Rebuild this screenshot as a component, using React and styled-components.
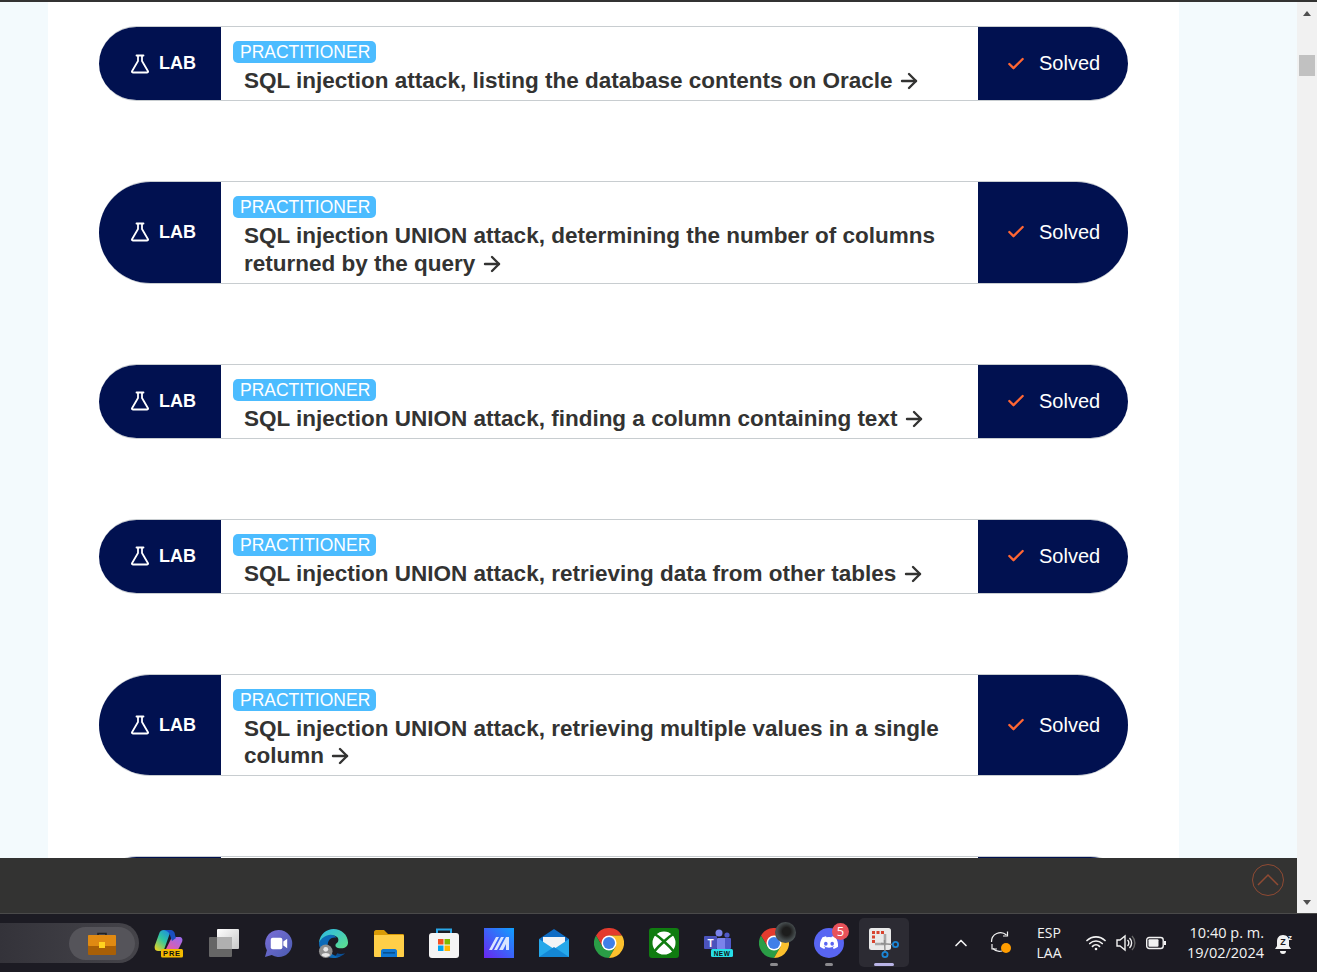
import React from 'react';
import styled, { createGlobalStyle } from 'styled-components';
import { ArrowRight, Check, ChevronUp } from 'lucide-react';

const Global = createGlobalStyle`
  html, body { margin: 0; padding: 0; overflow: hidden; }
  body { font-family: "Liberation Sans", Arial, sans-serif; background: #1c1b23; }
`;

const Screen = styled.div`
  width: 1317px;
  height: 972px;
  display: flex;
  flex-direction: column;
  overflow: hidden;
`;

const TopLine = styled.div`
  height: 2px;
  flex: none;
  background: #333332;
`;

const Browser = styled.div`
  height: 911px;
  flex: none;
  display: flex;
`;

const Page = styled.div`
  width: 1297px;
  display: flex;
  flex-direction: column;
`;

const Scroller = styled.div`
  height: 856px;
  flex: none;
  overflow: hidden;
  background: #f3fafd;
  padding: 0 118px 0 48px;
`;

const Column = styled.main`
  background: #fff;
  height: 1000px;
  padding: 24px 51px 0;
  display: flex;
  flex-direction: column;
  gap: 80px;
`;

const Card = styled.article`
  display: grid;
  grid-template-columns: 122px 757px 150px;
  width: 1029px;
  min-height: 75px;
  box-sizing: border-box;
  border-top: 1px solid #c8cdd0;
  border-bottom: 1px solid #c8cdd0;
  border-radius: 60px;
  overflow: hidden;
  flex: none;
`;

const Side = styled.div`
  background: #011150;
  color: #fff;
  display: flex;
  align-items: center;
  padding-left: ${(p) => (p.$right ? '28px' : '31px')};
`;

const LabText = styled.span`
  font-size: 18px;
  font-weight: 700;
  margin-left: 9px;
`;

const SolvedText = styled.span`
  font-size: 20px;
  margin-left: 13px;
`;

const Body = styled.div`
  padding: 14px 20px 5.3px 12px;
  background: #fff;
`;

const Badge = styled.span`
  display: block;
  width: 143px;
  height: 22px;
  line-height: 22px;
  box-sizing: border-box;
  padding-left: 7px;
  border-radius: 5px;
  background: #4cbcff;
  color: #fff;
  font-size: 17.5px;
  white-space: nowrap;
`;

const Title = styled.h3`
  margin: 4px 0 0 11px;
  color: #333332;
  font-size: 22.5px;
  line-height: 27.7px;
  font-weight: 700;
  svg { vertical-align: -1px; margin: -4px 0 -4px -2px; }
`;

const Footer = styled.footer`
  height: 55px;
  flex: none;
  background: #333332;
  display: flex;
  justify-content: flex-end;
  align-items: flex-start;
  padding: 6px 13px 0 0;
  box-sizing: border-box;
`;

const TopButton = styled.div`
  width: 32px;
  height: 32px;
  box-sizing: border-box;
  border: 1.5px solid #8f4a33;
  border-radius: 50%;
  display: flex;
  align-items: center;
  justify-content: center;
`;

const Scrollbar = styled.aside`
  width: 20px;
  background: #f1f1f1;
  position: relative;
`;

const Thumb = styled.div`
  position: absolute;
  left: 2px;
  top: 53px;
  width: 16px;
  height: 21px;
  background: #c1c1c1;
`;

const Arrow = styled.div`
  position: absolute;
  left: 6px;
  width: 0;
  height: 0;
  border-left: 4.5px solid transparent;
  border-right: 4.5px solid transparent;
  ${(p) => (p.$down
    ? 'bottom: 8px; border-top: 5px solid #505050;'
    : 'top: 9px; border-bottom: 5px solid #505050;')}
`;

const Taskbar = styled.div`
  height: 59px;
  flex: none;
  background: #1c1b23;
  border-top: 1px solid #4a4a4a;
  box-sizing: border-box;
  display: flex;
  align-items: stretch;
  color: #f2f2f2;
`;

const Search = styled.div`
  width: 139px;
  height: 40px;
  margin-top: 9px;
  box-sizing: border-box;
  border-radius: 0 20px 20px 0;
  background: linear-gradient(90deg, #34333a, #45444a);
  display: flex;
  justify-content: flex-end;
  align-items: center;
  padding-right: 4px;
  flex: none;
`;

const SearchChip = styled.div`
  width: 66px;
  height: 33px;
  border-radius: 17px;
  background: #55545a;
  display: flex;
  align-items: center;
  justify-content: center;
`;

const Apps = styled.div`
  display: flex;
  margin-left: 2px;
  flex: none;
`;

const Slot = styled.div`
  width: 55px;
  height: 58px;
  display: flex;
  justify-content: center;
  align-items: center;
  position: relative;
  svg { position: relative; }
`;

const ActiveBox = styled.div`
  position: absolute;
  left: 3px;
  top: 4px;
  width: 50px;
  height: 49px;
  border-radius: 5px;
  background: #2c2b33;
`;

const Running = styled.span`
  position: absolute;
  left: 50%;
  bottom: 6px;
  transform: translateX(-50%);
  width: ${(p) => (p.$active ? '20px' : '8px')};
  height: 3px;
  border-radius: 2px;
  background: ${(p) => (p.$active ? '#b9b4e6' : '#8b8a8e')};
`;

const Count = styled.span`
  position: absolute;
  left: 31px;
  top: 9px;
  width: 17px;
  height: 17px;
  border-radius: 50%;
  background: #e8525a;
  color: #fff;
  font: 13px/17px "Open Sans", sans-serif;
  text-align: center;
`;

const Avatar = styled.span`
  position: absolute;
  left: 29px;
  top: 8px;
  width: 21px;
  height: 21px;
  border-radius: 50%;
  background: radial-gradient(circle at 55% 45%, #1d1d1d 0 25%, #4a5254 60%, #39403f 100%);
`;

const Tray = styled.div`
  flex: 1;
  display: flex;
  align-items: center;
  font-family: "Open Sans", sans-serif;
  padding-left: 35px;
`;

const TrayIcon = styled.div`
  display: flex;
  align-items: center;
  justify-content: center;
  width: ${(p) => p.$w || 30}px;
  flex: none;
`;

const Lang = styled.div`
  width: 46px;
  margin-right: 9px;
  font-size: 14px;
  line-height: 20px;
  text-align: center;
  flex: none;
`;

const Clock = styled.div`
  width: 90px;
  margin: 0 8px 0 3px;
  font-size: 14.5px;
  line-height: 20px;
  text-align: right;
  white-space: nowrap;
  flex: none;
`;

const items = [
  'SQL injection attack, listing the database contents on Oracle',
  'SQL injection UNION attack, determining the number of columns returned by the query',
  'SQL injection UNION attack, finding a column containing text',
  'SQL injection UNION attack, retrieving data from other tables',
  'SQL injection UNION attack, retrieving multiple values in a single column',
];

function Flask() {
  return (
    <svg width="20" height="20" viewBox="0 0 20 20" fill="none" stroke="#fff" strokeWidth="1.8" strokeLinejoin="round" strokeLinecap="round">
      <path d="M6.5 1.5h7M8 1.5v5.5L2 17.2c-.4.7 0 1.3.8 1.3h14.4c.8 0 1.2-.6.8-1.3L12 7V1.5" />
    </svg>
  );
}

function LabRow({ name }) {
  return (
    <Card>
      <Side>
        <Flask />
        <LabText>LAB</LabText>
      </Side>
      <Body>
        <Badge>PRACTITIONER</Badge>
        <Title>{name} <ArrowRight size={24} strokeWidth={2.4} /></Title>
      </Body>
      <Side $right>
        <Check size={20} color="#ff6633" strokeWidth={2.8} />
        <SolvedText>Solved</SolvedText>
      </Side>
    </Card>
  );
}

const Briefcase = () => (
  <svg width="28" height="23" viewBox="0 0 28 23">
    <path d="M10 4V1.500h8V4" fill="none" stroke="#222" strokeWidth="1.600" />
    <rect y="3" width="28" height="20" rx="1" fill="#a85f06" />
    <rect y="3" width="28" height="11" rx="1" fill="#e08a12" />
    <rect x="11" y="10" width="6" height="6" fill="#ffd21f" />
  </svg>
);

const Copilot = () => (
  <svg width="29" height="29" viewBox="0 0 29 29">
    <defs>
      <linearGradient id="cpL" x1="0.8" y1="0" x2="0.1" y2="1">
        <stop offset="0" stopColor="#1f8fe0" />
        <stop offset="0.45" stopColor="#2fc6a0" />
        <stop offset="1" stopColor="#f0d21e" />
      </linearGradient>
      <linearGradient id="cpR" x1="0.9" y1="0" x2="0.1" y2="1">
        <stop offset="0" stopColor="#9a6bf0" />
        <stop offset="1" stopColor="#f05a9a" />
      </linearGradient>
    </defs>
    <path d="M1 16 5 5c1-3 2-4 5-4h7l-6 17c-1 3-2 4-4 4H4c-3 0-4-3-3-6z" fill="url(#cpL)" />
    <path d="M18 8h7c3 0 4 2 3 5l-3 6c-1 2-3 3-5 3h-9z" fill="url(#cpR)" />
    <path d="M10 1h6c3 0 5 2 5 5l1 3-4 3-2-6c-1-3-3-4-6-5z" fill="#1a4fc0" />
    <rect x="7" y="20" width="22" height="8.500" rx="1.500" fill="#f4bb00" />
    <text x="18" y="27" fontSize="7.500" fontWeight="700" letterSpacing="0.8" textAnchor="middle" fill="#111" fontFamily="Liberation Sans">PRE</text>
  </svg>
);

const TaskView = () => (
  <svg width="30" height="28" viewBox="0 0 30 28">
    <defs><linearGradient id="tv" x1="0" y1="0" x2="1" y2="1"><stop offset="0" stopColor="#fff" /><stop offset="1" stopColor="#c8c8c8" /></linearGradient></defs>
    <rect x="8" width="22" height="20" rx="1" fill="url(#tv)" />
    <rect y="8" width="23" height="20" rx="1" fill="#666" />
    <rect x="8" y="8" width="15" height="12" fill="#b0b0b0" />
  </svg>
);

const Meet = () => (
  <svg width="29" height="29" viewBox="0 0 30 30">
    <defs><linearGradient id="mt" x1="0" y1="0" x2="1" y2="1"><stop offset="0" stopColor="#7a6fd8" /><stop offset="1" stopColor="#4a5bb0" /></linearGradient></defs>
    <path d="M15 1a14 14 0 1 1-7 26L1 29l2-7A14 14 0 0 1 15 1z" fill="url(#mt)" />
    <rect x="7" y="9" width="12" height="12" rx="2" fill="#fff" />
    <path d="m20 13 4-3v10l-4-3z" fill="#fff" />
  </svg>
);

const Edge = () => (
  <svg width="31" height="31" viewBox="0 0 32 32">
    <defs><linearGradient id="ed" x1="0" y1="0" x2="1" y2="1"><stop offset="0" stopColor="#2bb8e8" /><stop offset="1" stopColor="#5fe08a" /></linearGradient></defs>
    <path d="M1 15C2 6 9 1 16 1c8 0 15 6 15 14 0 4-3 6-7 6-3 0-6-1-6-3 0-3 3-2 3-6 0-3-4-5-8-4-6 1-10 6-12 7z" fill="url(#ed)" />
    <path d="M1 15c2-4 7-8 12-8 3 0 5 1 6 3-5-1-9 2-9 8 0 6 5 11 11 11 2 0 3 0 4-1-3 2-6 3-9 3C8 31 1 24 1 15z" fill="#0c6ab8" />
    <path d="M18 29c3 1 7 0 10-3-3 1-6 1-8 0z" fill="#0a4f96" />
    <circle cx="8" cy="24" r="7" fill="#8e8e8e" />
    <circle cx="8" cy="22" r="2.500" fill="#e6e6e6" />
    <path d="M3.500 28c1-3 8-3 9 0a7 7 0 0 1-9 0z" fill="#e6e6e6" />
  </svg>
);

const Folder = () => (
  <svg width="30" height="27" viewBox="0 0 30 27">
    <path d="M0 2c0-1 1-2 2-2h8l4 4h15c1 0 1 1 1 2v6H0z" fill="#d99b06" />
    <path d="M0 5h29c1 0 1 1 1 2v19c0 1-1 1-1 1H1c-1 0-1-1-1-1z" fill="#ffcf48" />
    <path d="M7 27v-6c0-1 1-2 2-2h12c1 0 2 1 2 2v6z" fill="#0f78d4" />
    <rect x="9" y="22" width="12" height="1.600" fill="#07508f" />
  </svg>
);

const Store = () => (
  <svg width="30" height="30" viewBox="0 0 30 30">
    <path d="M8 6V1.500h14V6" fill="none" stroke="#29a7e8" strokeWidth="2" />
    <rect y="5" width="30" height="25" rx="3" fill="#f4f4f4" />
    <rect x="9" y="11" width="5.500" height="5.500" fill="#f25022" />
    <rect x="15.500" y="11" width="5.500" height="5.500" fill="#7fba00" />
    <rect x="9" y="17.500" width="5.500" height="5.500" fill="#00a4ef" />
    <rect x="15.500" y="17.500" width="5.500" height="5.500" fill="#ffb900" />
  </svg>
);

const Mark = () => (
  <svg width="30" height="30" viewBox="0 0 30 30">
    <defs><linearGradient id="mk" x1="1" y1="0" x2="0" y2="1"><stop offset="0" stopColor="#0fa0ff" /><stop offset="1" stopColor="#6a25f0" /></linearGradient></defs>
    <rect width="30" height="30" fill="url(#mk)" />
    <path d="M5 22 12 9h3L8 22zM10 22 17 9h3l-7 13zM15 22 22 9h3v13h-3v-6l-3 6z" fill="#d9e4ff" />
  </svg>
);

const Mail = () => (
  <svg width="30" height="28" viewBox="0 0 30 28">
    <path d="M0 10 15 0l15 10v18H0z" fill="#0e6cc4" />
    <path d="M4 8h22v11H4z" fill="#f2f4f6" />
    <path d="M0 10 15 20l15-10v18H0z" fill="#25a8ea" />
    <path d="M0 28 15 18l15 10z" fill="#1487d4" />
  </svg>
);

const Chrome = () => (
  <svg width="30" height="30" viewBox="0 0 30 30">
    <path d="M15 7.500H28A15 15 0 0 0 2 7.500L8.500 18.750z" fill="#e33b2e" />
    <path d="M8.500 18.750 2 7.500A15 15 0 0 0 15 30L21.500 18.750z" fill="#2a9d46" />
    <path d="M21.500 18.750 15 30A15 15 0 0 0 28 7.500H15z" fill="#fbc02d" />
    <circle cx="15" cy="15" r="7.500" fill="#fff" />
    <circle cx="15" cy="15" r="6" fill="#3f7fe8" />
  </svg>
);

const Xbox = () => (
  <svg width="30" height="30" viewBox="0 0 30 30">
    <rect width="30" height="30" rx="3" fill="#107c10" />
    <circle cx="15" cy="15" r="11.500" fill="#fff" />
    <path d="M5 5.500C9 8 12.500 11 15 13.500 17.500 11 21 8 25 5.500M15 13.500C11 17 7 21 4 25M15 13.500C19 17 23 21 26 25" fill="none" stroke="#107c10" strokeWidth="2.600" />
  </svg>
);

const Teams = () => (
  <svg width="29" height="28" viewBox="0 0 29 28">
    <circle cx="15" cy="4" r="3.500" fill="#7b83eb" />
    <circle cx="23" cy="6" r="2.600" fill="#5059c9" />
    <rect x="13" y="9" width="9" height="12" rx="1" fill="#7b83eb" />
    <rect x="21" y="9" width="6" height="11" rx="1" fill="#5059c9" />
    <rect y="7" width="13" height="13" rx="1" fill="#4b53bc" />
    <text x="6.500" y="17.500" fontSize="10" fontWeight="700" textAnchor="middle" fill="#fff" fontFamily="Liberation Sans">T</text>
    <rect x="7" y="20" width="22" height="8" rx="1.500" fill="#27dfe8" />
    <text x="18" y="26.500" fontSize="6.500" fontWeight="700" letterSpacing="0.5" textAnchor="middle" fill="#111" fontFamily="Liberation Sans">NEW</text>
  </svg>
);

const Discord = () => (
  <svg width="30" height="30" viewBox="0 0 30 30">
    <circle cx="15" cy="15" r="15" fill="#5865f2" />
    <path d="M21.500 9.300A15 15 0 0 0 18 8.200l-.5 1a13 13 0 0 0-5 0l-.5-1a15 15 0 0 0-3.500 1.100C6.300 12.500 5.700 15.700 6 18.800a15 15 0 0 0 4.300 2.100l1-1.500-1.700-.8.400-.3a10 10 0 0 0 10 0l.4.300-1.700.8 1 1.500a15 15 0 0 0 4.300-2.100c.4-3.600-.6-6.700-2.500-9.500z" fill="#fff" />
    <ellipse cx="11.800" cy="15.800" rx="1.800" ry="2" fill="#5865f2" />
    <ellipse cx="18.200" cy="15.800" rx="1.800" ry="2" fill="#5865f2" />
  </svg>
);

const Snip = () => (
  <svg width="30" height="30" viewBox="0 0 30 30">
    <rect width="22" height="22" rx="2.500" fill="#e9e9e9" />
    <path d="M3 3h3v3H3zM7.500 3h3v3h-3zM12 3h3v3h-3zM3 7.500h3v3H3zM3 12h3v3H3z" fill="#d8432e" />
    <path d="M16 6v10H6" fill="none" stroke="#a8a8a8" strokeWidth="2.600" />
    <path d="M24 16.500 12 15.500M16 23.500 15.500 12" fill="none" stroke="#8e8e8e" strokeWidth="1.400" />
    <circle cx="26.500" cy="16.500" r="2.600" fill="none" stroke="#1b86d6" strokeWidth="1.800" />
    <circle cx="16" cy="26.500" r="2.600" fill="none" stroke="#1b86d6" strokeWidth="1.800" />
  </svg>
);

const Sync = () => (
  <svg width="26" height="26" viewBox="0 0 26 26" fill="none" stroke="#f2f2f2" strokeWidth="1.200">
    <path d="M3.500 12a9 9 0 0 1 15-7" />
    <path d="M19.500 1.500V6H15" />
    <path d="M14 21a9 9 0 0 1-9-2.500" />
    <path d="M4 14v5h5" />
    <circle cx="18" cy="18" r="5" fill="#ff9d00" stroke="none" />
  </svg>
);

const Wifi = () => (
  <svg width="20" height="16" viewBox="0 0 20 16" fill="none" stroke="#f2f2f2" strokeWidth="1.700" strokeLinecap="round">
    <path d="M1 5.500a13 13 0 0 1 18 0M3.800 8.500a9 9 0 0 1 12.400 0M6.500 11.300a5 5 0 0 1 7 0" />
    <circle cx="10" cy="14" r="1.300" fill="#f2f2f2" stroke="none" />
  </svg>
);

const Volume = () => (
  <svg width="20" height="18" viewBox="0 0 20 18" fill="none" stroke="#f2f2f2" strokeWidth="1.400">
    <path d="M1 6h3l5-4v14l-5-4H1z" />
    <path d="M11.500 6a4 4 0 0 1 0 6M13.500 4a7 7 0 0 1 0 10" />
    <path d="M16 2a10 10 0 0 1 0 14" stroke="#666" />
  </svg>
);

const Battery = () => (
  <svg width="20" height="14" viewBox="0 0 20 14" fill="none">
    <rect x="0.700" y="1.500" width="16.500" height="11" rx="2.500" stroke="#f2f2f2" strokeWidth="1.400" />
    <rect x="2.500" y="3.300" width="10" height="7.400" rx="1" fill="#f2f2f2" />
    <path d="M18 5h2v4h-2z" fill="#f2f2f2" />
  </svg>
);

const Bell = () => (
  <svg width="20" height="22" viewBox="0 0 20 22">
    <path d="M9 3c-4 0-6 3-6 6v5l-2 3h16l-2-3V9c0-3-2-6-6-6z" fill="#f2f2f2" />
    <path d="M6 19h6a3 3 0 0 1-6 0z" fill="#f2f2f2" />
    <text x="9" y="13" fontSize="9" fontWeight="700" textAnchor="middle" fill="#1c1b23" fontFamily="Liberation Sans">Z</text>
    <text x="16" y="8" fontSize="8" fontWeight="700" textAnchor="middle" fill="#f2f2f2" fontFamily="Liberation Sans">z</text>
  </svg>
);

const TopChevron = () => (
  <svg width="24" height="14" viewBox="0 0 24 14" fill="none" stroke="#8f4a33" strokeWidth="1.500">
    <path d="M2 12 12 2l10 10" />
  </svg>
);

export default function App() {
  return (
    <Screen>
      <Global />
      <TopLine />
      <Browser>
        <Page>
          <Scroller>
            <Column>
              {items.map((name) => <LabRow key={name} name={name} />)}
              <Card><Side /><Body /><Side $right /></Card>
            </Column>
          </Scroller>
          <Footer>
            <TopButton><TopChevron /></TopButton>
          </Footer>
        </Page>
        <Scrollbar>
          <Arrow />
          <Thumb />
          <Arrow $down />
        </Scrollbar>
      </Browser>
      <Taskbar>
        <Search><SearchChip><Briefcase /></SearchChip></Search>
        <Apps>
          <Slot><Copilot /></Slot>
          <Slot><TaskView /></Slot>
          <Slot><Meet /></Slot>
          <Slot><Edge /></Slot>
          <Slot><Folder /></Slot>
          <Slot><Store /></Slot>
          <Slot><Mark /></Slot>
          <Slot><Mail /></Slot>
          <Slot><Chrome /></Slot>
          <Slot><Xbox /></Slot>
          <Slot><Teams /></Slot>
          <Slot><Chrome /><Avatar /><Running /></Slot>
          <Slot><Discord /><Count>5</Count><Running /></Slot>
          <Slot><ActiveBox /><Snip /><Running $active /></Slot>
        </Apps>
        <Tray>
          <TrayIcon><ChevronUp size={20} strokeWidth={2} /></TrayIcon>
          <TrayIcon $w={50}><Sync /></TrayIcon>
          <Lang>ESP<br />LAA</Lang>
          <TrayIcon><Wifi /></TrayIcon>
          <TrayIcon><Volume /></TrayIcon>
          <TrayIcon><Battery /></TrayIcon>
          <Clock>10:40 p. m.<br />19/02/2024</Clock>
          <TrayIcon $w={24}><Bell /></TrayIcon>
        </Tray>
      </Taskbar>
    </Screen>
  );
}
